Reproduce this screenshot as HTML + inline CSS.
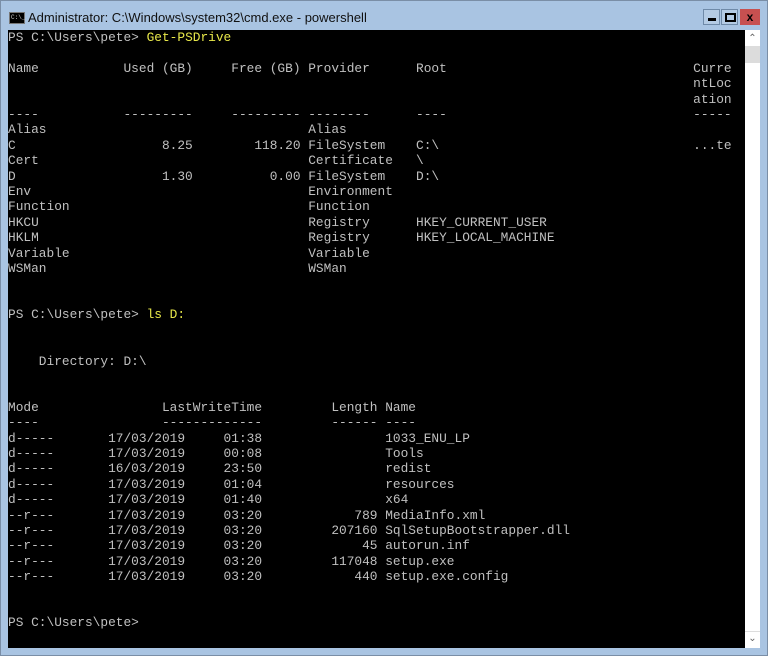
<!DOCTYPE html>
<html><head><meta charset="utf-8"><style>
html,body{margin:0;padding:0;width:768px;height:656px;overflow:hidden;background:#a9c4e2;}
.frame{position:absolute;left:0;top:0;width:766px;height:654px;border:1px solid #7a8ea6;background:#a9c4e2;}
.title{position:absolute;left:28px;top:10px;font:13px "Liberation Sans",sans-serif;color:#111;}
.icon{position:absolute;left:9px;top:12px;width:14px;height:10px;background:#000;border:1px solid #777;}
.icon span{position:absolute;left:1px;top:1px;font:6px "Liberation Mono",monospace;color:#ccc;}
.btn{position:absolute;top:9px;width:17px;height:16px;border:1px solid #6f8aa8;background:#b4cbe4;box-sizing:border-box;}
.console{position:absolute;left:8px;top:30px;width:737px;height:618px;background:#000;overflow:hidden;}
pre{margin:0;font:12.83px/15.4px "Liberation Mono",monospace;color:#c0c0c0;white-space:pre;}
.y{color:#e8e84a;}
.sb{position:absolute;left:745px;top:30px;width:15px;height:618px;background:#fff;}
.thumb{position:absolute;left:0;top:16px;width:15px;height:17px;background:#dcdcdc;}
</style></head><body>
<div class="frame"></div>
<div class="icon"><span>C:\_</span></div>
<div class="title">Administrator: C:\Windows\system32\cmd.exe - powershell</div>
<div class="btn" style="left:703px"><div style="position:absolute;left:4px;top:8px;width:8px;height:3px;background:#000"></div></div>
<div class="btn" style="left:721px"><div style="position:absolute;left:3px;top:3px;width:7px;height:5px;border:2px solid #000"></div></div>
<div class="btn" style="left:740px;width:20px;background:#c75050;border-color:#c75050;color:#000;font:bold 12px 'Liberation Sans',sans-serif;text-align:center;line-height:15px">x</div>
<div class="console"><pre>PS C:\Users\pete&gt; <span class="y">Get-PSDrive</span>

Name           Used (GB)     Free (GB) Provider      Root                                Curre
                                                                                         ntLoc
                                                                                         ation
----           ---------     --------- --------      ----                                -----
Alias                                  Alias
C                   8.25        118.20 FileSystem    C:\                                 ...te
Cert                                   Certificate   \
D                   1.30          0.00 FileSystem    D:\
Env                                    Environment
Function                               Function
HKCU                                   Registry      HKEY_CURRENT_USER
HKLM                                   Registry      HKEY_LOCAL_MACHINE
Variable                               Variable
WSMan                                  WSMan


PS C:\Users\pete&gt; <span class="y">ls D:</span>


    Directory: D:\


Mode                LastWriteTime         Length Name
----                -------------         ------ ----
d-----       17/03/2019     01:38                1033_ENU_LP
d-----       17/03/2019     00:08                Tools
d-----       16/03/2019     23:50                redist
d-----       17/03/2019     01:04                resources
d-----       17/03/2019     01:40                x64
--r---       17/03/2019     03:20            789 MediaInfo.xml
--r---       17/03/2019     03:20         207160 SqlSetupBootstrapper.dll
--r---       17/03/2019     03:20             45 autorun.inf
--r---       17/03/2019     03:20         117048 setup.exe
--r---       17/03/2019     03:20            440 setup.exe.config


PS C:\Users\pete&gt;</pre></div>
<div class="sb"><div style="position:absolute;left:0;top:0;width:15px;height:16px;text-align:center;font:10px 'Liberation Sans',sans-serif;color:#666;line-height:18px">&#8963;</div><div class="thumb"></div><div style="position:absolute;left:0;bottom:0;width:15px;height:16px;border-top:1px solid #ddd;text-align:center;font:10px 'Liberation Sans',sans-serif;color:#666;line-height:14px">&#8964;</div></div>
</body></html>
